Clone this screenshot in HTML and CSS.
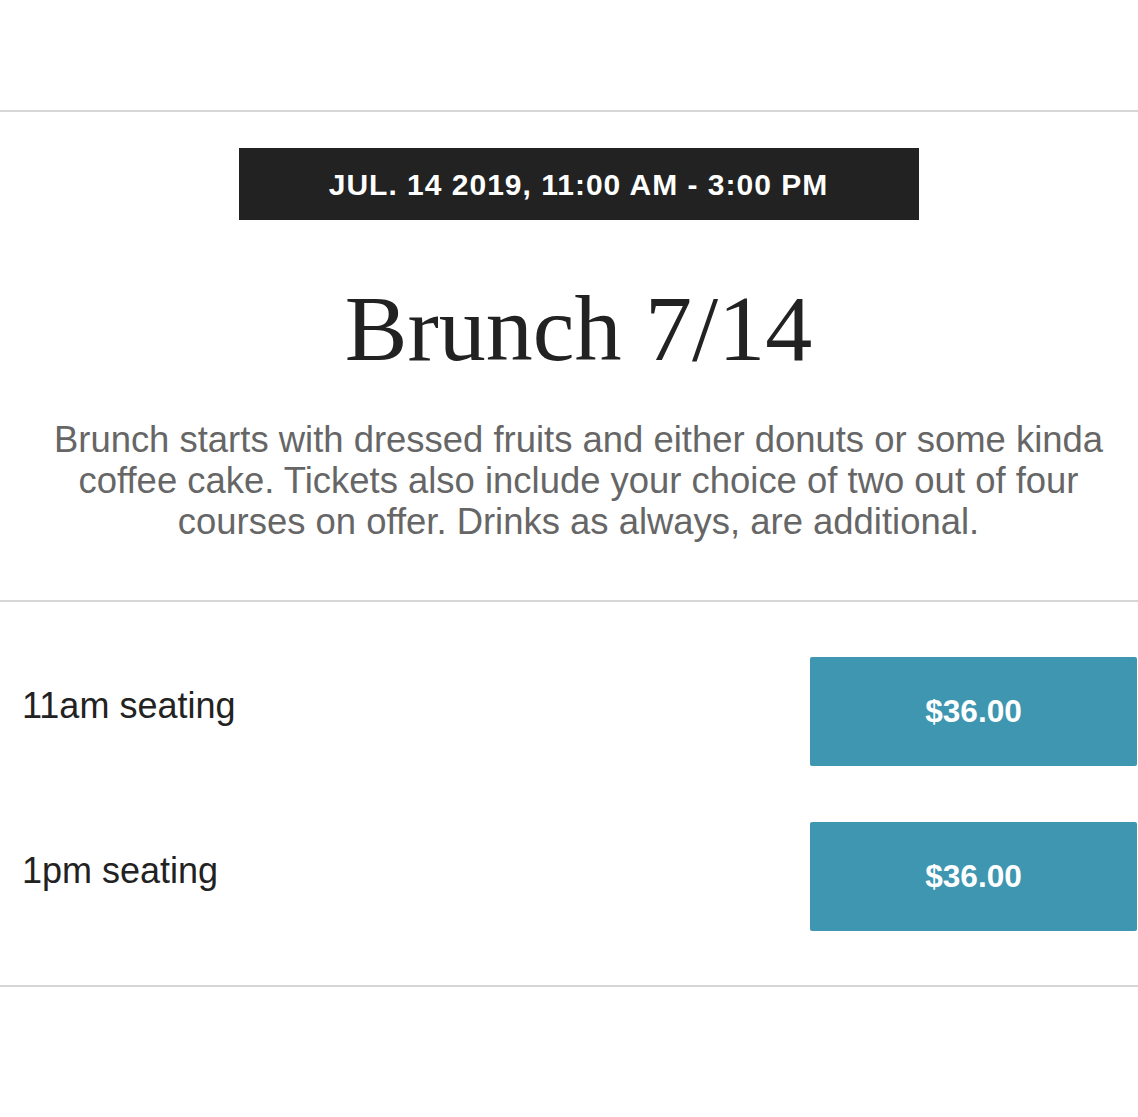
FILE: index.html
```html
<!DOCTYPE html>
<html>
<head>
<meta charset="utf-8">
<link rel="stylesheet" href="styles.css">
</head>
<body>
<div class="top"></div>
<section class="event">
  <div class="date-bar">JUL. 14 2019, 11:00 AM - 3:00 PM</div>
  <h1 class="title">Brunch 7/14</h1>
  <p class="desc">Brunch starts with dressed fruits and either donuts or some kinda coffee cake. Tickets also include your choice of two out of four courses on offer. Drinks as always, are additional.</p>
</section>
<section class="tickets">
  <div class="ticket">
    <span class="ticket-name">11am seating</span>
    <button class="price">$36.00</button>
  </div>
  <div class="ticket">
    <span class="ticket-name">1pm seating</span>
    <button class="price">$36.00</button>
  </div>
</section>
</body>
</html>
```
FILE: styles.css
```css
html, body {
  margin: 0;
  padding: 0;
  background: #fff;
}
body {
  width: 1138px;
  font-family: "Liberation Sans", Arial, sans-serif;
}
.top {
  height: 110px;
  border-bottom: 2px solid #d6d6d6;
}
.event {
  padding: 36px 1px 58px 20px;
  display: flex;
  flex-direction: column;
  align-items: center;
  border-bottom: 2px solid #d6d6d6;
}
.date-bar {
  width: 680px;
  height: 72px;
  background: #222;
  color: #fff;
  font-weight: bold;
  font-size: 30px;
  display: flex;
  align-items: center;
  justify-content: center;
  letter-spacing: 1px;
  padding-top: 2px;
  box-sizing: border-box;
}
.title {
  margin: 61px 0 0;
  font-family: "Liberation Serif", Georgia, serif;
  font-weight: normal;
  font-size: 94px;
  line-height: 1;
  color: #222;
}
.desc {
  margin: 44px 0 0;
  font-size: 36.45px;
  line-height: 41px;
  color: #666;
  text-align: center;
}
.tickets {
  padding: 55px 1px 54px 22px;
  display: flex;
  flex-direction: column;
  gap: 56px;
  border-bottom: 2px solid #d6d6d6;
}
.ticket {
  display: flex;
  justify-content: space-between;
  align-items: center;
}
.ticket-name {
  font-size: 36px;
  color: #222;
  padding-bottom: 11px;
}
.price {
  width: 327px;
  height: 109px;
  border: none;
  border-radius: 2px;
  background: #3e96b0;
  color: #fff;
  font-family: "Liberation Sans", Arial, sans-serif;
  font-weight: bold;
  font-size: 31.6px;
}
```
